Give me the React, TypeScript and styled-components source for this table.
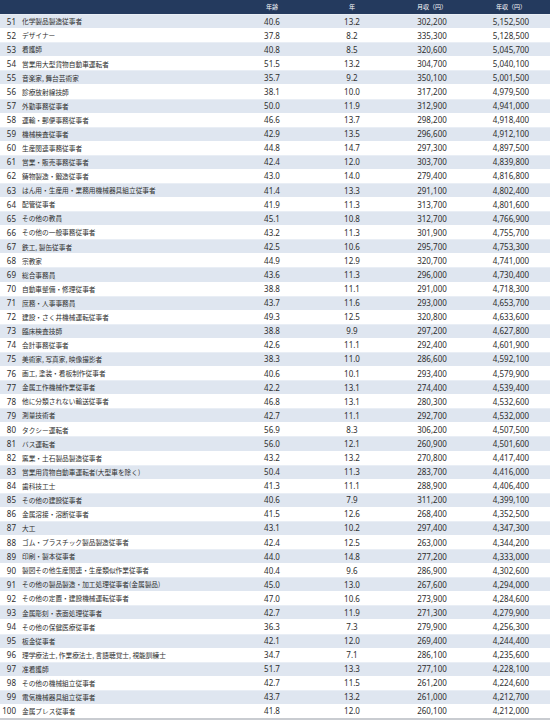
import React from "react";
import styled, { createGlobalStyle } from "styled-components";

const GlobalStyle = createGlobalStyle`
  html, body { margin: 0; padding: 0; background: #ffffff; }
  body { font-family: "Noto Sans", "Noto Sans CJK JP", sans-serif; }
`;

type Row = [number, string, string, string, string, string];

const rows: Row[] = [
  [51, "化学製品製造従事者", "40.6", "13.2", "302,200", "5,152,500"],
  [52, "デザイナー", "37.8", "8.2", "335,300", "5,128,500"],
  [53, "看護師", "40.8", "8.5", "320,600", "5,045,700"],
  [54, "営業用大型貨物自動車運転者", "51.5", "13.2", "304,700", "5,040,100"],
  [55, "音楽家, 舞台芸術家", "35.7", "9.2", "350,100", "5,001,500"],
  [56, "診療放射線技師", "38.1", "10.0", "317,200", "4,979,500"],
  [57, "外勤事務従事者", "50.0", "11.9", "312,900", "4,941,000"],
  [58, "運輸・郵便事務従事者", "46.6", "13.7", "298,200", "4,918,400"],
  [59, "機械検査従事者", "42.9", "13.5", "296,600", "4,912,100"],
  [60, "生産関連事務従事者", "44.8", "14.7", "297,300", "4,897,500"],
  [61, "営業・販売事務従事者", "42.4", "12.0", "303,700", "4,839,800"],
  [62, "鋳物製造・鍛造従事者", "43.0", "14.0", "279,400", "4,816,800"],
  [63, "はん用・生産用・業務用機械器具組立従事者", "41.4", "13.3", "291,100", "4,802,400"],
  [64, "配管従事者", "41.9", "11.3", "313,700", "4,801,600"],
  [65, "その他の教員", "45.1", "10.8", "312,700", "4,766,900"],
  [66, "その他の一般事務従事者", "43.2", "11.3", "301,900", "4,755,700"],
  [67, "鉄工, 製缶従事者", "42.5", "10.6", "295,700", "4,753,300"],
  [68, "宗教家", "44.9", "12.9", "320,700", "4,741,000"],
  [69, "総合事務員", "43.6", "11.3", "296,000", "4,730,400"],
  [70, "自動車整備・修理従事者", "38.8", "11.1", "291,000", "4,718,300"],
  [71, "庶務・人事事務員", "43.7", "11.6", "293,000", "4,653,700"],
  [72, "建設・さく井機械運転従事者", "49.3", "12.5", "320,800", "4,633,600"],
  [73, "臨床検査技師", "38.8", "9.9", "297,200", "4,627,800"],
  [74, "会計事務従事者", "42.6", "11.1", "292,400", "4,601,900"],
  [75, "美術家, 写真家, 映像撮影者", "38.3", "11.0", "286,600", "4,592,100"],
  [76, "画工, 塗装・看板制作従事者", "40.6", "10.1", "293,400", "4,579,900"],
  [77, "金属工作機械作業従事者", "42.2", "13.1", "274,400", "4,539,400"],
  [78, "他に分類されない輸送従事者", "46.8", "13.1", "280,300", "4,532,600"],
  [79, "測量技術者", "42.7", "11.1", "292,700", "4,532,000"],
  [80, "タクシー運転者", "56.9", "8.3", "306,200", "4,507,500"],
  [81, "バス運転者", "56.0", "12.1", "260,900", "4,501,600"],
  [82, "窯業・土石製品製造従事者", "43.2", "13.2", "270,800", "4,417,400"],
  [83, "営業用貨物自動車運転者(大型車を除く)", "50.4", "11.3", "283,700", "4,416,000"],
  [84, "歯科技工士", "41.3", "11.1", "288,900", "4,406,400"],
  [85, "その他の建設従事者", "40.6", "7.9", "311,200", "4,399,100"],
  [86, "金属溶接・溶断従事者", "41.5", "12.6", "268,400", "4,352,500"],
  [87, "大工", "43.1", "10.2", "297,400", "4,347,300"],
  [88, "ゴム・プラスチック製品製造従事者", "42.4", "12.5", "263,000", "4,344,200"],
  [89, "印刷・製本従事者", "44.0", "14.8", "277,200", "4,333,000"],
  [90, "製図その他生産関連・生産類似作業従事者", "40.4", "9.6", "286,900", "4,302,600"],
  [91, "その他の製品製造・加工処理従事者(金属製品)", "45.0", "13.0", "267,600", "4,294,000"],
  [92, "その他の定置・建設機械運転従事者", "47.0", "10.6", "273,900", "4,284,600"],
  [93, "金属彫刻・表面処理従事者", "42.7", "11.9", "271,300", "4,279,900"],
  [94, "その他の保健医療従事者", "36.3", "7.3", "279,900", "4,256,300"],
  [95, "板金従事者", "42.1", "12.0", "269,400", "4,244,400"],
  [96, "理学療法士, 作業療法士, 言語聴覚士, 視能訓練士", "34.7", "7.1", "286,100", "4,235,600"],
  [97, "准看護師", "51.7", "13.3", "277,100", "4,228,100"],
  [98, "その他の機械組立従事者", "42.7", "11.5", "261,200", "4,224,600"],
  [99, "電気機械器具組立従事者", "43.7", "13.2", "261,000", "4,212,700"],
  [100, "金属プレス従事者", "41.8", "12.0", "260,100", "4,212,000"],
];

const Table = styled.div`
  width: 550px;
  display: flex;
  flex-direction: column;
  border-bottom: 2px solid #c9ccd1;
`;

const Grid = styled.div`
  display: grid;
  grid-template-columns: 16px 216px 80px 80px 80px 78px;
  height: 14.08px;
  align-items: center;
  box-sizing: border-box;
`;

const HeaderRow = styled(Grid)`
  background: #243a5e;
  color: #ffffff;
`;

const BodyRow = styled(Grid)<{ $shaded: boolean }>`
  background: ${(p) => (p.$shaded ? "#dfe6f0" : "#ffffff")};
  border-top: 1px solid ${(p) => (p.$shaded ? "#e9eef5" : "#ffffff")};
  color: #2e2e2e;
`;

const HeadCell = styled.div`
  font-family: "Noto Sans CJK JP", sans-serif;
  font-size: 6px;
  text-align: center;
  line-height: 1;
  white-space: nowrap;
`;

const NumCell = styled.div`
  font-family: "Noto Sans", "Noto Sans CJK JP", sans-serif;
  font-size: 8px;
  text-align: right;
  line-height: 1;
  white-space: nowrap;
`;

const NameCell = styled.div`
  font-family: "Noto Sans CJK JP", sans-serif;
  font-size: 6.7px;
  padding-left: 6px;
  line-height: 1;
  white-space: nowrap;
`;

const ValueCell = styled.div`
  font-family: "Noto Sans", "Noto Sans CJK JP", sans-serif;
  font-size: 8px;
  text-align: center;
  line-height: 1;
  white-space: nowrap;
`;

export default function App() {
  return (
    <>
      <GlobalStyle />
      <Table>
        <HeaderRow>
          <HeadCell />
          <HeadCell />
          <HeadCell>年齢</HeadCell>
          <HeadCell>年</HeadCell>
          <HeadCell>月収（円）</HeadCell>
          <HeadCell>年収（円）</HeadCell>
        </HeaderRow>
        {rows.map((r) => (
          <BodyRow key={r[0]} $shaded={r[0] % 2 === 1}>
            <NumCell>{r[0]}</NumCell>
            <NameCell>{r[1]}</NameCell>
            <ValueCell>{r[2]}</ValueCell>
            <ValueCell>{r[3]}</ValueCell>
            <ValueCell>{r[4]}</ValueCell>
            <ValueCell>{r[5]}</ValueCell>
          </BodyRow>
        ))}
      </Table>
    </>
  );
}
